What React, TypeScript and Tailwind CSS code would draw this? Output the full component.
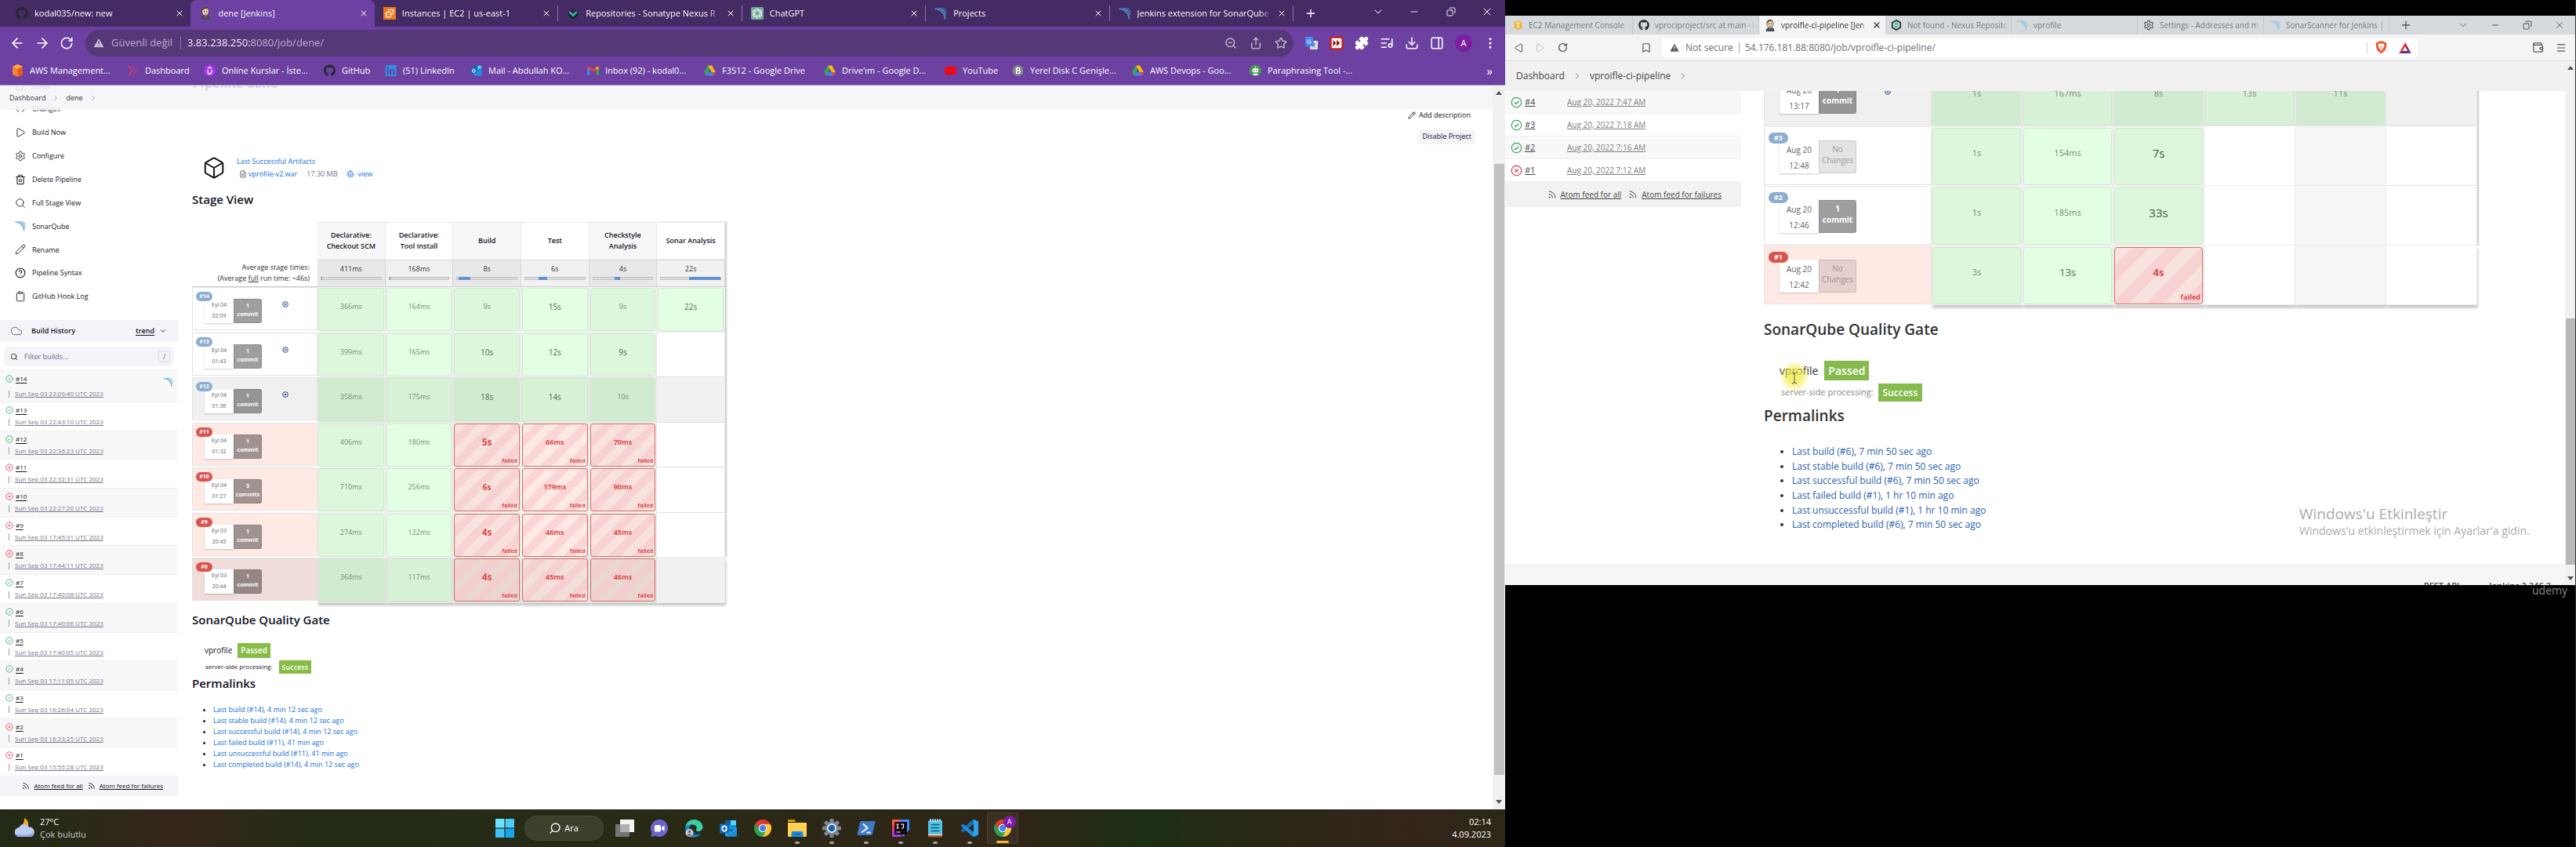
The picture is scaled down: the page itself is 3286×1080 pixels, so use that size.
import React from "react";
import {
  ArrowLeft, ArrowRight, RotateCw, TriangleAlert, ZoomOut, Share, Star, Puzzle, ListMusic, Download,
  PanelRight, MoreVertical, X, Plus, ChevronDown, ChevronRight, Minus, Copy, Play, Settings, Trash2, Search,
  Pencil, CircleHelp, Clipboard, Cloud, Rss, Box, FileText, Fingerprint, Code, Bookmark, Wallet, Menu, Triangle,
} from "lucide-react";
import { FaGithub, FaYoutube, FaLinkedin } from "react-icons/fa";

type Size = "sm" | "lg";

/* ---------- drawings ---------- */

const Waves = ({ className, color }: { className: string; color: string }) => (
  <svg viewBox="0 0 16 16" className={className} fill="none" stroke={color} strokeLinecap="round">
    <path d="M1 2.2c6.500.2 11.600 5 12.400 12.600" strokeWidth="1.500" />
    <path d="M6 1.400c4.200 1.200 7.200 4.400 8.400 8.600" strokeWidth="1.200" />
    <path d="M10.600 1.300c2 1 3.600 2.600 4.500 4.700" strokeWidth="1" />
  </svg>
);

const Butler = ({ className }: { className: string }) => (
  <svg viewBox="0 0 16 18" className={className}>
    <path d="M3 6.500C2.500 2.500 5 .5 8 .5s5.300 2 4.800 6c-.2 3-1.500 6-4.600 6S3.200 9.500 3 6.500z" fill="#efd3b5" stroke="#3d2b22" strokeWidth=".8" />
    <path d="M3 6C2.600 2.300 5 .4 8.200.5c2.300 0 3.600 1 4.200 2.500C9 1.800 6 2.500 4.600 4.500z" fill="#5d4636" />
    <path d="M1.500 18c0-3.500 2-5.500 4.500-6l2.500 2 2.500-2c2 .6 3.600 2.500 3.600 6z" fill="#335061" />
    <path d="M6.500 12.800l2 1 2-1v3l-2-1-2 1z" fill="#d33833" />
    <circle cx="6.300" cy="6.500" r=".8" fill="#222" />
    <circle cx="9.800" cy="6.500" r=".8" fill="#222" />
    <path d="M6.500 9.700q1.600 1 3 0" stroke="#7a3b2b" strokeWidth=".8" fill="none" />
  </svg>
);

const Ec2 = ({ className }: { className: string }) => (
  <svg viewBox="0 0 16 16" className={className}>
    <rect width="16" height="16" fill="#ed7b1c" />
    <path d="M3.500 6.500h6v6h-6zM6.500 6.500v-3h6v6h-3" fill="none" stroke="#fff" strokeWidth="1" />
    <path d="M5 9.500h3M11 3v-1M13 5h1M5 13v1M2.500 8h1" stroke="#fff" strokeWidth=".8" />
  </svg>
);

const Nexus = ({ className }: { className: string }) => (
  <svg viewBox="0 0 16 16" className={className} fill="none">
    <path d="M2 8.500l6 5.500 6-5.500" stroke="#1b1f3b" strokeWidth="3" />
    <path d="M3.500 6.500L8 11l4.500-4.500" stroke="#1bd68b" strokeWidth="2" />
    <path d="M8 2v4" stroke="#1b1f3b" strokeWidth="2.400" />
  </svg>
);

const NexusHex = ({ className }: { className: string }) => (
  <svg viewBox="0 0 16 16" className={className} fill="none">
    <path d="M8 1l6 3.500v7L8 15l-6-3.500v-7z" stroke="#22303a" strokeWidth="2" />
    <path d="M8 4l3 2v4l-3 2-3-2V6z" fill="#3cc294" />
    <path d="M5 7l3 2 3-2" stroke="#fff" strokeWidth="1" />
  </svg>
);

const Chat = ({ className }: { className: string }) => (
  <svg viewBox="0 0 16 16" className={className}>
    <rect width="16" height="16" rx="2" fill="#74aa9c" />
    <g fill="none" stroke="#fff" strokeWidth=".9">
      {[0, 60, 120, 180, 240, 300].map((a) => (
        <path key={a} transform={"rotate(" + a + " 8 8)"} d="M5.600 6.600V4.200a2.300 2.300 0 0 1 4.300-1.100L6.800 5" />
      ))}
    </g>
  </svg>
);

const AwsCube = ({ className }: { className: string }) => (
  <svg viewBox="0 0 14 16" className={className}>
    <path d="M7 0l6.500 3v10L7 16 .5 13V3z" fill="#f58536" />
    <path d="M7 0l6.500 3L7 6 .5 3z" fill="#fba94c" />
    <path d="M7 6v10l6.500-3V3z" fill="#e05a1c" />
  </svg>
);

const Ec2Yellow = ({ className }: { className: string }) => (
  <svg viewBox="0 0 14 16" className={className}>
    <path d="M7 0l6.500 3v10L7 16 .5 13V3z" fill="#f5b335" />
    <path d="M4 4l3-1 3 1v1.500H4zM5.500 7h3v5l-1.500 1-1.500-1z" fill="#fff3d6" />
  </svg>
);

const Chevrons = ({ className }: { className: string }) => (
  <svg viewBox="0 0 16 16" className={className} fill="none" strokeWidth="2.500">
    <path d="M2 1l5 7-5 7" stroke="#b0417f" />
    <path d="M7.500 1l5 7-5 7" stroke="#9a3f8c" />
  </svg>
);

const Udemy = ({ className }: { className: string }) => (
  <svg viewBox="0 0 16 16" className={className}>
    <circle cx="8" cy="8" r="8" fill="#a435f0" />
    <path d="M5.500 7v3a2.500 2.500 0 0 0 5 0V7M5.500 5L8 3.500 10.500 5" fill="none" stroke="#fff" strokeWidth="1.400" />
  </svg>
);

const Outlook = ({ className }: { className: string }) => (
  <svg viewBox="0 0 24 24" className={className}>
    <rect x="8" y="2" width="14" height="12" rx="1" fill="#1490df" />
    <path d="M8 2h7v6H8z" fill="#0a5fa8" />
    <path d="M15 2h6a1 1 0 0 1 1 1v5h-7z" fill="#50d9ff" />
    <path d="M8 11l7.500 5L23 11v10a1.500 1.500 0 0 1-1.500 1.500h-12A1.500 1.500 0 0 1 8 21z" fill="#28a8ea" />
    <path d="M8 22.500L23 12v9a1.500 1.500 0 0 1-1.500 1.500z" fill="#1b8fdb" />
    <rect x="1" y="6.500" width="12" height="12" rx="1.200" fill="#0f6cbd" />
    <ellipse cx="7" cy="12.500" rx="2.800" ry="3.200" fill="none" stroke="#fff" strokeWidth="1.700" />
  </svg>
);

const Gmail = ({ className }: { className: string }) => (
  <svg viewBox="0 0 16 12" className={className}>
    <path d="M0 1.500h3.500V12H1a1 1 0 0 1-1-1z" fill="#4285f4" />
    <path d="M12.500 1.500H16V11a1 1 0 0 1-1 1h-2.500z" fill="#34a853" />
    <path d="M0 1.800C0 .2 1.800-.5 3 .5L8 4.300 13 .5c1.200-1 3-.3 3 1.300L8 8.200z" fill="#ea4335" />
    <path d="M12.500 1L16 1.800V3l-3.500 2.700z" fill="#fbbc04" />
  </svg>
);

const Drive = ({ className }: { className: string }) => (
  <svg viewBox="0 0 16 14" className={className}>
    <path d="M5.300 0L8 4.700 2.700 14 0 9.300z" fill="#34a853" />
    <path d="M5.300 0h5.400L16 9.300h-5.400z" fill="#fbbc04" />
    <path d="M5.400 9.300H16L13.300 14H2.700z" fill="#4285f4" />
    <path d="M10.600 9.300H16L13.300 14z" fill="#ea4335" />
  </svg>
);

const Disk = ({ className }: { className: string }) => (
  <svg viewBox="0 0 16 16" className={className}>
    <circle cx="8" cy="8" r="7.500" fill="#80868b" />
    <path d="M6 4.500h2.800a1.700 1.700 0 0 1 0 3.400H6zM6 8h3.200a1.800 1.800 0 0 1 0 3.600H6z" fill="none" stroke="#fff" strokeWidth="1.500" />
  </svg>
);

const Quill = ({ className }: { className: string }) => (
  <svg viewBox="0 0 16 16" className={className}>
    <circle cx="8" cy="8" r="8" fill="#499557" />
    <rect x="4" y="5" width="8" height="5.500" rx="1.500" fill="#fff" />
    <path d="M5 12h6v2H5zM7.500 2.500h1v2h-1z" fill="#fff" />
    <circle cx="6.300" cy="7.700" r=".9" fill="#499557" />
    <circle cx="9.700" cy="7.700" r=".9" fill="#499557" />
  </svg>
);

const Translate = () => (
  <svg viewBox="0 0 18 18" className="size-[18px]">
    <rect x="7" y="6" width="10" height="11" rx="1" fill="#dfe3e8" />
    <path d="M10 10h5M12.500 9v1c0 2-1 3.500-2.500 4.500M11 11c.8 1.800 2 2.800 3.500 3.500" stroke="#6b7886" strokeWidth=".9" fill="none" />
    <path d="M2 1h8.500l2.500 12H2a1 1 0 0 1-1-1V2a1 1 0 0 1 1-1z" fill="#4a8af4" />
    <path d="M8 5.700a2.300 2.300 0 1 0 .4 1.800H6.300" stroke="#fff" fill="none" />
  </svg>
);

const FastForward = () => (
  <svg viewBox="0 0 18 18" className="size-[18px]">
    <rect x="1.500" y="1.500" width="15" height="15" rx="2.500" fill="#fff" stroke="#c5221f" strokeWidth="2.400" />
    <path d="M4.500 5l4 4-4 4zM9 5l4.500 4L9 13z" fill="#8c1d18" />
  </svg>
);

const Chrome = ({ className }: { className: string }) => (
  <svg viewBox="0 0 24 24" className={className}>
    <path d="M12 7h9.900A11 11 0 0 0 2.600 6.300l5.100 8.200A5 5 0 0 1 12 7z" fill="#e33b2e" />
    <path d="M21.900 7H12a5 5 0 0 1 4.300 7.500L11.700 23A11 11 0 0 0 21.900 7z" fill="#fcc934" />
    <path d="M2.600 6.300A11 11 0 0 0 11.700 23l4.600-8.500a5 5 0 0 1-8.600 0z" fill="#2fa14f" />
    <circle cx="12" cy="12" r="5.300" fill="#fff" />
    <circle cx="12" cy="12" r="4.200" fill="#4285f4" />
  </svg>
);

const WindowsLogo = () => (
  <svg viewBox="0 0 24 24" className="size-6">
    <path d="M0 0h11.400v11.400H0z" fill="#6fe0fb" />
    <path d="M12.600 0H24v11.400H12.600z" fill="#4ccbf7" />
    <path d="M0 12.600h11.400V24H0z" fill="#3fc3f6" />
    <path d="M12.600 12.600H24V24H12.600z" fill="#17a6ee" />
  </svg>
);

const TaskView = () => (
  <svg viewBox="0 0 24 24" className="size-6">
    <rect x="6" y="1" width="18" height="16" fill="#f4f4f4" />
    <rect x="0" y="7" width="18" height="16" fill="#737573" />
    <rect x="6" y="7" width="12" height="10" fill="#b0b1af" />
  </svg>
);

const TeamsChat = () => (
  <svg viewBox="0 0 24 24" className="size-6">
    <path d="M12 1a11 11 0 1 1-5 20.800L1.500 23l1.200-5.200A11 11 0 0 1 12 1z" fill="#6c66cc" />
    <rect x="6" y="8" width="8" height="8.500" rx="1.500" fill="#fff" />
    <path d="M15 11l3.500-2.500v7.500L15 13.500z" fill="#fff" />
  </svg>
);

const Edge = () => (
  <svg viewBox="0 0 24 24" className="size-6">
    <path d="M1.200 11C2 5 6.500 1 12.300 1 18.500 1 23.500 5.500 23.500 10.500c0 3.500-2.700 5.500-5.500 5.500-2.300 0-3.500-1-3-2 .5-.9.800-1.500.8-2.500 0-2.400-2.300-4-5.200-4C6 7.500 2 9 1.200 11z" fill="#39cfa8" />
    <path d="M1.200 11C3 8.200 6.500 7 10 7.200c-3 1-4.200 3.300-3.700 6.800.7 4.500 5 7 10 6.500 2.200-.3 4-1.200 5.200-2.300C19.500 21.500 16 23.500 12 23.500 5 23.500 .3 17.500 1.200 11z" fill="#1b86d2" />
    <path d="M9.500 11.500c-2 5 1.500 9.500 7 9 2-.2 3.800-1.200 5-2.300-4 1.500-11 .5-12-6.700z" fill="#0e4f8f" />
    <circle cx="6.500" cy="18" r="5" fill="#c9cdd3" />
    <circle cx="6.500" cy="16.500" r="1.800" fill="#5c6470" />
    <path d="M3.300 21.500c.5-3 6-3 6.400 0z" fill="#5c6470" />
  </svg>
);

const Explorer = () => (
  <svg viewBox="0 0 24 24" className="size-6">
    <path d="M0 2.500A1.500 1.500 0 0 1 1.500 1H8l2.500 3H0z" fill="#d99a12" />
    <path d="M0 5h23a1 1 0 0 1 1 1v15.500a1.500 1.500 0 0 1-1.500 1.500h-21A1.500 1.500 0 0 1 0 21.500z" fill="#ffd052" />
    <path d="M4.500 23v-5A2 2 0 0 1 6.500 16h11a2 2 0 0 1 2 2v5z" fill="#1a8fe0" />
    <path d="M8 18.500h8v1.800H8z" fill="#0c6fbd" />
  </svg>
);

const Gear = () => (
  <svg viewBox="0 0 24 24" className="size-6">
    <g fill="#7d8791">
      {[0, 45, 90, 135].map((a) => (
        <rect key={a} x="9.500" y="0" width="5" height="24" rx="1" transform={"rotate(" + a + " 12 12)"} />
      ))}
      <circle cx="12" cy="12" r="8.500" />
    </g>
    <circle cx="12" cy="12" r="6" fill="#e9eef2" />
    <circle cx="12" cy="12" r="4.300" fill="#1464a8" />
  </svg>
);

const PowerShell = () => (
  <svg viewBox="0 0 24 24" className="size-6">
    <path d="M5 3h17.500a1 1 0 0 1 1 1.300l-3.700 15.500a1.500 1.500 0 0 1-1.500 1.200H1.500a1 1 0 0 1-1-1.300L4 4.200A1.500 1.500 0 0 1 5 3z" fill="#4079c8" />
    <path d="M8 6.500l5.500 5.500-7.500 5.500M12.500 17.500h5" stroke="#fff" strokeWidth="1.900" fill="none" />
  </svg>
);

const Idea = () => (
  <svg viewBox="0 0 24 24" className="size-6">
    <path d="M1 1h12l-3 12L1 15z" fill="#fe5d3d" />
    <path d="M11 1h12v13l-8 9-5-9z" fill="#3e8bff" />
    <path d="M1 12l9-3 3 14H1z" fill="#b03ad8" />
    <path d="M1 6l4 6-4 5z" fill="#fe315d" />
    <rect x="4" y="4" width="16" height="16" fill="#14060f" />
    <path d="M6.500 7h3M8 7v5M6.500 12h3M12 7h3.500v3.500q0 1.500-2.500 1.500M6.500 17h5" stroke="#fff" strokeWidth="1.200" fill="none" />
  </svg>
);

const Notepad = () => (
  <svg viewBox="0 0 24 24" className="size-6">
    <rect x="3" y="2" width="18" height="20" rx="1.500" fill="#53c5e8" />
    <rect x="3" y="21" width="18" height="2.500" rx="1" fill="#c2571c" />
    <path d="M3 20.500h18" stroke="#eef2f3" strokeWidth="1" />
    <path d="M6 0v4M9 0v4M12 0v4M15 0v4M18 0v4" stroke="#d9f3fb" strokeWidth="1.300" />
    <path d="M6.500 7.500h11M6.500 11.500h11M6.500 15.500h11" stroke="#0f5c7c" strokeWidth="1.600" />
  </svg>
);

const VsCode = () => (
  <svg viewBox="0 0 24 24" className="size-6">
    <path d="M17.500 6.500L3.500 17.200 1 16V14.800L15 1.500l2.500-.5z" fill="#1272b8" />
    <path d="M17.500 17.500L3.500 6.800 1 8v1.200L15 22.500l2.500.5z" fill="#1b8bd4" />
    <path d="M17 .8l6 2.800v16.800l-6 2.800z" fill="#2ca3ea" />
  </svg>
);

const Weather = () => (
  <svg viewBox="0 0 28 28" className="size-7">
    <path d="M13 1c6 3 6.500 9 3 13H5C10 12 13 8 13 1z" fill="#f5a524" />
    <path d="M7 25a6 6 0 0 1-.5-12A7 7 0 0 1 19 12.500 6.300 6.300 0 0 1 20.500 25z" fill="#bccdf2" />
    <path d="M7 25a6 6 0 0 1-5.500-4c6 2 18 2 24.500-2a6.200 6.200 0 0 1-5.500 6z" fill="#93acdf" />
  </svg>
);

const Brave = () => (
  <svg viewBox="0 0 16 18" className="h-[17px] w-[15px]">
    <path d="M5 .5h6l1.300 1.400 1.700-.2 1.500 2.300-.6 1.500.3 1L13.500 13 8 17.500 2.500 13 .8 6.500l.3-1L.5 4 2 1.700l1.700.2z" fill="#f1562b" />
    <path d="M8 3.800l2.600-.5 2 2.500-1.400 2.400.5 1.400-2 1.300L8 14.300l-1.700-3.400-2-1.300.5-1.400-1.400-2.400 2-2.500z" fill="#fff" />
    <path d="M6 7l1.300 1M10 7L8.700 8M8 8v2.500" stroke="#f1562b" strokeWidth=".8" />
  </svg>
);

const Bat = () => (
  <svg viewBox="0 0 18 16" className="h-[14px] w-4">
    <path d="M9 0L0 16l5.500-3.500L9 6z" fill="#e8452c" />
    <path d="M9 0l9 16-5.500-3.500L9 6z" fill="#a0236e" />
    <path d="M0 16h18l-5.500-3.500h-7z" fill="#5e2b8e" />
  </svg>
);

const Status = ({ ok, className }: { ok: boolean; className: string }) => (
  <svg viewBox="0 0 12 12" className={className} fill="none" stroke={ok ? "#3aa864" : "#e23a55"}>
    <circle cx="6" cy="6" r="5" />
    {ok ? <path d="M4 6.200l1.400 1.400L8.200 4.600" /> : <path d="M4.300 4.300l3.400 3.400M7.700 4.300L4.300 7.700" />}
  </svg>
);

const Target = () => (
  <svg viewBox="0 0 10 10" className="size-2" fill="none" stroke="#3a5ba0" strokeWidth="1.300">
    <circle cx="5" cy="5" r="4" />
    <path d="M5 3v4M3 5h4" />
  </svg>
);

/* ---------- stage view ---------- */

type Cell = { t: string; big?: 0 | 1 | 2; failed?: boolean } | null;
type Run = { id: string; date: string; time: string; n: string; label: string; ok: boolean; dim?: boolean; mark?: boolean; cells: Cell[] };

const g = (t: string, big: 0 | 1 | 2 = 0): Cell => ({ t, big });
const f = (t: string, big: 0 | 1 | 2 = 0): Cell => ({ t, big, failed: true });

const StageCell = ({ cell, odd, dim, size }: { cell: Cell; odd: boolean; dim?: boolean; size: Size }) => {
  const lg = size === "lg";
  if (!cell) {
    const fill = dim ? "bg-[#f1f1f1]" : lg && odd ? "bg-[#f6f6f6]" : "bg-white";
    return <td className={"border-b border-r border-[#ececec] p-0 " + fill} />;
  }
  const fs = lg
    ? cell.big === 2 ? "text-[15px]" : cell.big === 1 ? "text-[13px]" : "text-[11px]"
    : cell.big === 2 ? "text-[12px]" : cell.big === 1 ? "text-[10px]" : "text-[9px]";
  const pad = lg ? "h-[73px] pt-[21px] leading-5 rounded-[4px] " : "h-[55px] pt-[15px] leading-4 rounded-[3px] ";
  let look: string;
  if (cell.failed) {
    const stripes = lg ? "bg-[size:44px_44px] " : "bg-[size:30px_30px] ";
    look =
      "border-[#dc6b68] font-bold text-[#db4c4c] bg-[linear-gradient(-45deg,#f8c8cc99_25%,transparent_25%,transparent_50%,#f8c8cc99_50%,#f8c8cc99_75%,transparent_75%)] " +
      stripes +
      (dim ? (odd ? "bg-[#ead7d2]" : "bg-[#f2dfda]") : odd ? "bg-[#f7e2de]" : "bg-[#ffe9e4]");
  } else {
    const ink = cell.big === 2 ? "text-[#3f583f] " : cell.big === 1 ? "text-[#4f6b55] " : "text-[#748f79] ";
    look = "border-[#d8e3d8] " + ink + (dim ? (odd ? "bg-[#d1ebd1]" : "bg-[#d8f2d8]") : odd ? "bg-[#dcf7dc]" : "bg-[#e3ffe3]");
  }
  return (
    <td className={"border-r border-[#e4eae4] p-px align-middle " + (dim ? "bg-[#dfeadf]" : "bg-[#ecf6ec]")}>
      <div className={"relative border text-center " + pad + fs + " " + look}>
        {cell.t}
        {cell.failed && (
          <span className={lg ? "absolute bottom-0 right-[2px] text-[9px] leading-4" : "absolute bottom-0 right-[2px] text-[7px] leading-3"}>failed</span>
        )}
      </div>
    </td>
  );
};

const StageRow = ({ run, size }: { run: Run; size: Size }) => {
  const lg = size === "lg";
  const bg = run.ok ? (run.dim ? "bg-[#f0f0f0]" : "bg-white") : run.dim ? "bg-[#f0dcd8]" : "bg-[#ffe9e5]";
  const none = run.label === "Changes";
  const commit = none
    ? run.ok ? "bg-[#e4e4e4] text-[#9c9c9c]" : "bg-[#e6d0cd] text-[#a08f8d]"
    : run.ok ? (run.dim ? "bg-[#959595] text-white" : "bg-[#9e9e9e] text-white") : run.dim ? "bg-[#958884] text-white" : "bg-[#a09290] text-white";
  return (
    <tr className={lg ? "h-[76px]" : "odd:h-[58px] even:h-[57px]"}>
      <th scope="row" className="p-0 align-top font-normal">
        <div className={"flex border border-[#e6e2e2] " + bg + (lg ? " h-[75px] pl-[5px] pt-[7px]" : " h-[55px] pl-[4px] pt-[5px]")}>
          <div className="relative">
            <span
              className={
                "absolute left-0 top-0 rounded-full text-center font-bold text-white " +
                (lg ? "w-[25px] text-[9px] leading-[14px] " : "w-[21px] text-[7px] leading-[12px] ") +
                (run.ok ? "bg-[#8aadd0]" : "bg-[#d9534f]")
              }
            >
              {run.id}
            </span>
            <div className={lg ? "ml-[14px] mt-[10px] flex text-[10px]" : "ml-[11px] mt-[9px] flex text-[7px]"}>
              <div
                className={
                  "bg-white text-center text-[#5f5f6b] shadow-[0_1px_2px_#0003] " +
                  (lg ? "h-[42px] w-[50px] pt-[2px] leading-[20px]" : "h-[31px] w-[37px] pt-px leading-[14px]")
                }
              >
                {run.date}
                <br />
                {run.time}
              </div>
              <div
                className={
                  "rounded-r-[3px] border border-black/10 text-center " +
                  commit +
                  (none ? "" : " font-bold") +
                  (lg ? " h-[42px] w-[48px] pt-[3px] leading-[14px]" : " h-[31px] w-[36px] pt-[2px] leading-[11px]")
                }
              >
                {run.n}
                <br />
                {run.label}
              </div>
            </div>
          </div>
          {run.mark && (
            <div className={lg ? "ml-9 mt-5" : "ml-[26px] mt-3"}>
              <Target />
            </div>
          )}
        </div>
      </th>
      {run.cells.map((c, i) => (
        <StageCell key={i} cell={c} odd={i % 2 === 0} dim={run.dim} size={size} />
      ))}
    </tr>
  );
};

const stages = [
  { name: "Declarative:|Checkout SCM", avg: "411ms", at: 0, w: 1 },
  { name: "Declarative:|Tool Install", avg: "168ms", at: 0, w: 1 },
  { name: "Build", avg: "8s", at: 2, w: 20 },
  { name: "Test", avg: "6s", at: 22, w: 15 },
  { name: "Checkstyle|Analysis", avg: "4s", at: 36, w: 10 },
  { name: "Sonar Analysis", avg: "22s", at: 47, w: 53 },
];

const leftRuns: Run[] = [
  { id: "#14", date: "Eyl 04", time: "02:09", n: "1", label: "commit", ok: true, mark: true, cells: [g("366ms"), g("164ms"), g("9s"), g("15s", 1), g("9s"), g("22s", 1)] },
  { id: "#13", date: "Eyl 04", time: "01:43", n: "1", label: "commit", ok: true, mark: true, cells: [g("399ms"), g("165ms"), g("10s", 1), g("12s", 1), g("9s", 1), null] },
  { id: "#12", date: "Eyl 04", time: "01:36", n: "1", label: "commit", ok: true, dim: true, mark: true, cells: [g("358ms"), g("175ms"), g("18s", 1), g("14s", 1), g("10s"), null] },
  { id: "#11", date: "Eyl 04", time: "01:32", n: "1", label: "commit", ok: false, cells: [g("406ms"), g("180ms"), f("5s", 2), f("66ms"), f("70ms"), null] },
  { id: "#10", date: "Eyl 04", time: "01:27", n: "3", label: "commits", ok: false, cells: [g("710ms"), g("256ms"), f("6s", 1), f("179ms"), f("90ms"), null] },
  { id: "#9", date: "Eyl 03", time: "20:45", n: "1", label: "commit", ok: false, cells: [g("274ms"), g("122ms"), f("4s", 2), f("46ms"), f("45ms"), null] },
  { id: "#8", date: "Eyl 03", time: "20:44", n: "1", label: "commit", ok: false, dim: true, cells: [g("364ms"), g("117ms"), f("4s", 2), f("45ms"), f("46ms"), null] },
];

const rightRuns: Run[] = [
  { id: "#4", date: "Aug 20", time: "13:17", n: "1", label: "commit", ok: true, dim: true, mark: true, cells: [g("1s"), g("167ms"), g("8s"), g("13s"), g("11s"), null] },
  { id: "#3", date: "Aug 20", time: "12:48", n: "No", label: "Changes", ok: true, cells: [g("1s"), g("154ms"), g("7s", 2), null, null, null] },
  { id: "#2", date: "Aug 20", time: "12:46", n: "1", label: "commit", ok: true, cells: [g("1s"), g("185ms"), g("33s", 2), null, null, null] },
  { id: "#1", date: "Aug 20", time: "12:42", n: "No", label: "Changes", ok: false, cells: [g("3s"), g("13s", 1), f("4s", 1), null, null, null] },
];

/* ---------- left window ---------- */

const leftTabs = [
  { t: "kodal035/new: new", i: <FaGithub className="size-4 text-[#24292f]" /> },
  { t: "dene [Jenkins]", i: <Butler className="size-4" />, on: true },
  { t: "Instances | EC2 | us-east-1", i: <Ec2 className="size-4" /> },
  { t: "Repositories - Sonatype Nexus R", i: <Nexus className="size-4" /> },
  { t: "ChatGPT", i: <Chat className="size-4" /> },
  { t: "Projects", i: <Waves className="size-4" color="#4b9fd5" /> },
  { t: "Jenkins extension for SonarQube", i: <Waves className="size-4" color="#4b9fd5" /> },
];

const bookmarks = [
  { t: "AWS Management...", w: "w-[147px]", i: <AwsCube className="h-4 w-[15px]" /> },
  { t: "Dashboard", w: "w-[98px]", i: <Chevrons className="size-4" /> },
  { t: "Online Kurslar - İste...", w: "w-[153px]", i: <Udemy className="size-4" /> },
  { t: "GitHub", w: "w-[78px]", i: <FaGithub className="size-4 text-[#24292f]" /> },
  { t: "(51) LinkedIn", w: "w-[109px]", i: <FaLinkedin className="size-4 text-[#2f8fe0]" /> },
  { t: "Mail - Abdullah KO...", w: "w-[149px]", i: <Outlook className="size-4" /> },
  { t: "Inbox (92) - kodal0...", w: "w-[149px]", i: <Gmail className="h-3 w-4" /> },
  { t: "F3512 - Google Drive", w: "w-[153px]", i: <Drive className="h-[14px] w-4" /> },
  { t: "Drive'ım - Google D...", w: "w-[154px]", i: <Drive className="h-[14px] w-4" /> },
  { t: "YouTube", w: "w-[86px]", i: <FaYoutube className="size-4 text-[#f00]" /> },
  { t: "Yerel Disk C Genişle...", w: "w-[153px]", i: <Disk className="size-4" /> },
  { t: "AWS Devops - Goo...", w: "w-[150px]", i: <Drive className="h-[14px] w-4" /> },
  { t: "Paraphrasing Tool -...", w: "w-[150px]", i: <Quill className="size-4" /> },
];

const menu = [
  { t: "Build Now", i: <Play className="size-3.5" strokeWidth={1.5} /> },
  { t: "Configure", i: <Settings className="size-3.5" strokeWidth={1.5} /> },
  { t: "Delete Pipeline", i: <Trash2 className="size-3.5" strokeWidth={1.8} /> },
  { t: "Full Stage View", i: <Search className="size-3.5" strokeWidth={1.5} /> },
  { t: "SonarQube", i: <Waves className="size-3.5" color="#4b9fd5" /> },
  { t: "Rename", i: <Pencil className="size-3.5" strokeWidth={1.5} /> },
  { t: "Pipeline Syntax", i: <CircleHelp className="size-3.5" strokeWidth={1.8} /> },
  { t: "GitHub Hook Log", i: <Clipboard className="size-3.5" strokeWidth={1.5} /> },
];

const builds: [string, string, boolean][] = [
  ["#13", "Sun Sep 03 22:43:10 UTC 2023", true],
  ["#12", "Sun Sep 03 22:36:23 UTC 2023", true],
  ["#11", "Sun Sep 03 22:32:31 UTC 2023", false],
  ["#10", "Sun Sep 03 22:27:20 UTC 2023", false],
  ["#9", "Sun Sep 03 17:45:31 UTC 2023", false],
  ["#8", "Sun Sep 03 17:44:11 UTC 2023", false],
  ["#7", "Sun Sep 03 17:40:08 UTC 2023", true],
  ["#6", "Sun Sep 03 17:40:06 UTC 2023", true],
  ["#5", "Sun Sep 03 17:40:05 UTC 2023", true],
  ["#4", "Sun Sep 03 17:11:05 UTC 2023", true],
  ["#3", "Sun Sep 03 16:26:04 UTC 2023", true],
  ["#2", "Sun Sep 03 16:23:25 UTC 2023", false],
  ["#1", "Sun Sep 03 15:55:28 UTC 2023", false],
];

const BuildEntry = ({ id, date, ok, first }: { id: string; date: string; ok: boolean; first?: boolean }) => (
  <div className="pl-[7px] pt-1">
    <div className="flex h-3 items-center gap-[3px]">
      <Status ok={ok} className="size-[10px]" />
      <a href="#" className="text-[8px] font-medium text-[#14141f] underline underline-offset-2">{id}</a>
    </div>
    <div className={"ml-1 flex h-3 items-center " + (first ? "mt-[7px]" : "mt-[3px]")}>
      <span className="h-[9px] w-px bg-[#9a9aa8]" />
      <a href="#" className="ml-[7px] text-[8px] text-[#74748a] underline">{date}</a>
    </div>
  </div>
);

const LeftBrowserBar = () => (
  <header className="bg-[#6d41a1] text-white">
    <div className="flex h-[34px] bg-[#452b64] pl-[9px]">
      <div className="grid w-[1641px] grid-cols-7">
        {leftTabs.map((t, k) => (
          <div key={t.t} className={"flex min-w-0 items-center gap-2 pl-[11px] pr-2 text-[11px] " + (t.on ? "rounded-t-lg bg-[#6d41a1]" : "")}>
            <span className="shrink-0">{t.i}</span>
            <span className="flex-1 overflow-hidden whitespace-nowrap [mask-image:linear-gradient(to_right,black_92%,transparent)]">{t.t}</span>
            <button aria-label="Close tab" className="shrink-0"><X className="size-3" /></button>
            {k > 1 && <span className="-mr-2 h-5 w-px bg-[#8a72a5]" />}
          </div>
        ))}
      </div>
      <button aria-label="New tab" className="ml-3 flex w-5 items-center justify-center"><Plus className="size-4" /></button>
      <div className="ml-auto grid w-[185px] grid-cols-4 place-items-center pb-1">
        <button aria-label="Search tabs"><ChevronDown className="size-4" strokeWidth={1.5} /></button>
        <button aria-label="Minimize"><Minus className="size-3.5" strokeWidth={1.5} /></button>
        <button aria-label="Restore"><Copy className="size-3 -scale-x-100" strokeWidth={1.8} /></button>
        <button aria-label="Close"><X className="size-4" strokeWidth={1.5} /></button>
      </div>
    </div>
    <div className="flex h-[42px] items-center pl-3">
      <div className="flex w-[97px] gap-3">
        <button aria-label="Back"><ArrowLeft className="size-5" /></button>
        <button aria-label="Forward"><ArrowRight className="size-5" /></button>
        <button aria-label="Reload"><RotateCw className="size-[18px]" /></button>
      </div>
      <div className="flex h-[34px] flex-1 items-center rounded-full bg-[#563879] pl-[9px] pr-2 text-[13px]">
        <TriangleAlert className="size-4 fill-[#c8bfd3] text-[#563879]" />
        <span className="ml-2 w-[80px] whitespace-nowrap text-[#b9abc9]">Güvenli değil</span>
        <span className="mx-2 h-4 w-px bg-[#8a72a5]" />
        <input
          aria-label="Address"
          defaultValue="3.83.238.250:8080/job/dene/"
          className="flex-1 bg-[linear-gradient(90deg,#ffffff_80px,#c3b6d2_80px)] bg-clip-text text-transparent outline-none"
        />
        <div className="flex items-center gap-4 text-[#c8bfd3]">
          <ZoomOut className="size-4" />
          <Share className="size-4" />
          <Star className="size-4" />
        </div>
      </div>
      <div className="ml-[14px] mr-[10px] flex items-center gap-[14px]">
        <Translate />
        <FastForward />
        <Puzzle className="size-[18px] fill-white" />
        <ListMusic className="size-[18px]" />
        <Download className="size-[18px]" />
        <PanelRight className="size-[18px]" />
        <span className="flex size-[22px] items-center justify-center rounded-full bg-[#7b1fa2] text-[11px]">A</span>
        <MoreVertical className="size-[18px]" />
      </div>
    </div>
    <nav className="flex h-[33px] items-center border-b border-[#a184c4] pb-1 pl-[15px] pr-4 text-[11px]">
      {bookmarks.map((b) => (
        <a href="#" key={b.t} className={"flex shrink-0 items-center gap-2 whitespace-nowrap " + b.w}>
          <span className="flex w-[15px] shrink-0 justify-center">{b.i}</span>
          {b.t}
        </a>
      ))}
      <span className="ml-auto text-[15px]">»</span>
    </nav>
  </header>
);

const LeftSidebar = () => (
  <aside className="w-[227px] text-[9px] text-[#14141f]">
    <a href="#" className="-mt-[9px] mb-[7px] flex h-4 items-center gap-2 pl-[19px]">
      <Code className="size-3.5" strokeWidth={1.5} />
      Changes
    </a>
    <nav className="grid h-[239px] auto-rows-fr">
      {menu.map((m) => (
        <a href="#" key={m.t} className="flex items-center gap-2 pl-[19px]">
          {m.i}
          {m.t}
        </a>
      ))}
    </nav>
    <div className="mt-[15px] flex h-7 items-center bg-[#f3f3f8] pl-[13px] pr-[14px]">
      <Cloud className="size-4 text-[#6a6a80]" strokeWidth={1.5} />
      <span className="ml-[11px] font-semibold">Build History</span>
      <a href="#" className="ml-auto font-semibold underline underline-offset-2">trend</a>
      <ChevronDown className="ml-1.5 size-2.5" />
    </div>
    <label className="mx-[5px] mt-[6px] flex h-[25px] items-center rounded-md bg-[#f3f3f8] pl-2 pr-[5px]">
      <Search className="size-2.5" />
      <input aria-label="Filter builds" placeholder="Filter builds..." className="ml-2 w-0 flex-1 bg-transparent outline-none placeholder:text-[#6a6a80]" />
      <kbd className="flex size-[15px] items-center justify-center rounded-[3px] border border-[#d8d8e2] font-sans text-[8px] text-[#6a6a80]">/</kbd>
    </label>
    <div className="mt-[5px] flex h-10 justify-between border-t border-[#efeff3] bg-[#f8f8f8] pr-[6px]">
      <BuildEntry id="#14" date="Sun Sep 03 23:09:40 UTC 2023" ok first />
      <Waves className="mt-2 size-3" color="#4b9fd5" />
    </div>
    <ul className="grid h-[477px] auto-rows-fr">
      {builds.map(([id, date, ok]) => (
        <li key={id} className="border-t border-[#efeff3] even:bg-[#f8f8f8]">
          <BuildEntry id={id} date={date} ok={ok} />
        </li>
      ))}
    </ul>
    <div className="flex h-[26px] items-center justify-end gap-[5px] bg-[#f3f3f8] pr-[19px] text-[8px] font-medium">
      <Rss className="size-2.5" />
      <a href="#" className="mr-px underline">Atom feed for all</a>
      <Rss className="size-2.5" />
      <a href="#" className="underline">Atom feed for failures</a>
    </div>
  </aside>
);

const LeftStageView = () => (
  <table className="w-[680px] table-fixed border-separate border-spacing-0 text-[9px]">
    <colgroup>
      <col className="w-[160px]" />
      {stages.map((s) => <col key={s.name} />)}
    </colgroup>
    <thead>
      <tr className="h-12">
        <td className="p-0" />
        {stages.map((s, i) => (
          <th
            key={s.name}
            scope="col"
            className={
              "border-r border-t border-[#e8e8ea] p-0 font-semibold leading-[14px] text-[#14141f] last:shadow-[2px_0_2px_#ccc] " +
              (i % 2 ? "bg-white" : "bg-[#f7f7f7]")
            }
          >
            {s.name.split("|").map((l) => <div key={l}>{l}</div>)}
          </th>
        ))}
      </tr>
      <tr className="h-[35px]">
        <td className="border-b border-[#c9c9c9] p-0 pr-[10px] text-right leading-[14px] text-[#333]">
          Average stage times:
          <br />
          (Average <u>full</u> run time: ~46s)
        </td>
        {stages.map((s, i) => (
          <td
            key={s.name}
            className={"border-b border-r border-t border-[#d6d6d6] p-0 px-1 text-center leading-[14px] text-[#333] last:shadow-[2px_0_2px_#ccc] " + (i % 2 ? "bg-[#f1f1f1]" : "bg-[#e8e8e8]")}
          >
            {s.avg}
            <div className="mb-1 mt-[3px] flex h-1 border border-[#c4c4c4] bg-[#dcdcdc]">
              <div className="-my-px bg-[#6290d4]" style={{ marginLeft: s.at + "%", width: s.w + "%" }} />
            </div>
          </td>
        ))}
      </tr>
    </thead>
    <tbody className="[&>tr:not(:last-child)>td:last-child]:shadow-[2px_0_2px_#ccc] [&>tr:last-child>td]:shadow-[1px_3px_3px_#c4c4c4]">
      {leftRuns.map((r) => <StageRow key={r.id} run={r} size="sm" />)}
    </tbody>
  </table>
);

const leftLinks = [
  "Last build (#14), 4 min 12 sec ago",
  "Last stable build (#14), 4 min 12 sec ago",
  "Last successful build (#14), 4 min 12 sec ago",
  "Last failed build (#11), 41 min ago",
  "Last unsuccessful build (#11), 41 min ago",
  "Last completed build (#14), 4 min 12 sec ago",
];

const LeftMain = () => (
  <main className="min-w-0 flex-1 pl-[18px] text-[#14141f]">
    <div className="flex flex-col items-end gap-[11px] pr-[22px] text-[9px]">
      <a href="#" className="mr-[6px] flex items-center gap-1"><Pencil className="size-2.5" />Add description</a>
      <button className="h-[19px] rounded-[4px] bg-[#f3f3f8] px-[5px]">Disable Project</button>
    </div>
    <div className="mt-[14px] flex items-center gap-[14px] pl-[13px] text-[9px] leading-[16px]">
      <Box className="size-[30px]" strokeWidth={1.6} />
      <div className="text-[#1471d8]">
        <a href="#">Last Successful Artifacts</a>
        <div className="flex items-center pl-[3px]">
          <FileText className="mr-0.5 size-2.5 text-[#666]" />
          <a href="#">vprofile-v2.war</a>
          <span className="ml-3 mr-3 text-[#73738c]">17.30 MB</span>
          <Fingerprint className="mr-1 size-2.5" />
          <a href="#">view</a>
        </div>
      </div>
    </div>
    <h2 className="mt-3 text-[15px] font-semibold leading-6">Stage View</h2>
    <div className="mt-[17px]">
      <LeftStageView />
    </div>
    <h2 className="mt-[9px] text-[15px] font-semibold leading-6">SonarQube Quality Gate</h2>
    <div className="mt-[18px] pl-4">
      <div className="flex h-[19px] items-center gap-[7px] text-[10px]">
        vprofile
        <span className="bg-[#87bc45] px-1 font-semibold leading-[19px] text-white">Passed</span>
      </div>
      <div className="mt-[3px] flex h-[17px] items-center gap-2 pl-px text-[8px]">
        server-side processing:
        <span className="bg-[#87bc45] px-1 text-[9px] font-semibold leading-[17px] text-white">Success</span>
      </div>
    </div>
    <h2 className="text-[15px] font-semibold leading-6">Permalinks</h2>
    <ul className="mt-[15px] list-disc pl-[27px] text-[9px] leading-[14px]">
      {leftLinks.map((l) => (
        <li key={l}><a href="#" className="text-[#1471d8]">{l}</a></li>
      ))}
    </ul>
  </main>
);

const taskIcons = [TaskView, TeamsChat, Edge, () => <Outlook className="size-6" />, () => <Chrome className="size-6" />, Explorer, Gear, PowerShell, Idea, Notepad, VsCode];

const Taskbar = () => (
  <footer className="grid h-12 grid-cols-[1fr_auto_1fr] items-center bg-[linear-gradient(90deg,#212b16,#35251a_12%,#212b16_22%,#262b16_36%,#2c2716_55%,#2f2516_68%,#1c2f14_76%,#2a2716_84%,#33241a_94%,#2c2817)] pl-[18px] pr-[18px] text-[11px] leading-4 text-white">
    <div className="flex items-center gap-[5px]">
      <Weather />
      <div>
        27°C
        <div className="text-[#c8cbc2]">Çok bulutlu</div>
      </div>
    </div>
    <div className="ml-2.5 flex h-12 items-center">
      <button aria-label="Start" className="mr-[13px]"><WindowsLogo /></button>
      <button className="mr-[5px] flex h-8 w-[101px] items-center justify-center gap-1 rounded-full border border-white/5 bg-white/10">
        <Search className="size-4 -scale-x-100" />
        Ara
      </button>
      {taskIcons.map((Ic, i) => (
        <div key={i} className="relative flex h-12 w-11 items-center justify-center">
          <Ic />
          {i > 4 && <span className="absolute bottom-1 h-[3px] w-1.5 rounded-full bg-[#a3a5a0]" />}
        </div>
      ))}
      <div className="relative flex h-10 w-10 items-center justify-center rounded border border-white/10 bg-white/5">
        <Chrome className="size-6" />
        <span className="absolute right-0.5 top-[3px] flex size-4 items-center justify-center rounded-full bg-[#7b1fa2] text-[9px]">A</span>
        <span className="absolute bottom-0 h-[3px] w-4 rounded-full bg-[#fcb42c]" />
      </div>
    </div>
    <div className="text-right">
      02:14
      <div>4.09.2023</div>
    </div>
  </footer>
);

const Arrow = ({ down }: { down?: boolean }) => (
  <svg viewBox="0 0 8 5" className={down ? "h-[5px] w-2 rotate-180" : "h-[5px] w-2"}><path d="M4 0l4 5H0z" fill="#505050" /></svg>
);

const LeftWindow = () => (
  <section className="flex h-[1080px] flex-col bg-white">
    <LeftBrowserBar />
    <div className="flex min-h-0 flex-1">
      <div className="min-w-0 flex-1">
        <div className="relative z-10 h-[31px] overflow-hidden bg-[#f5f5f8]/90 text-[9px]">
          <div className="absolute left-[19px] top-[-6px] flex items-center gap-2 text-[#dedee4]"><Clipboard className="size-3" />Status</div>
          <div className="absolute left-[246px] top-[-13px] text-[16px] font-bold leading-5 text-[#d8d8de]">Pipeline dene</div>
          <div className="flex items-center gap-2 pl-3 pt-[9px] leading-[13px] text-[#333340]">
            Dashboard <ChevronRight className="size-2.5 text-[#8a8a9a]" /> dene <ChevronRight className="size-2.5 text-[#8a8a9a]" />
          </div>
        </div>
        <div className="flex">
          <LeftSidebar />
          <LeftMain />
        </div>
      </div>
      <div className="flex w-4 flex-col items-center bg-[#f1f1f1] py-[7px]">
        <Arrow />
        <div className="mt-[88px] h-[779px] w-[13px] bg-[#c1c1c1]" />
        <div className="mt-auto"><Arrow down /></div>
      </div>
    </div>
    <Taskbar />
  </section>
);

/* ---------- right window ---------- */

const rightTabs = [
  { t: "EC2 Management Console", i: <Ec2Yellow className="h-3 w-[13px]" /> },
  { t: "vprociproject/src at main · i", i: <FaGithub className="size-3.5 text-[#24292f]" /> },
  { t: "vproifle-ci-pipeline [Jen", i: <Butler className="h-[15px] w-3.5" />, on: true },
  { t: "Not found - Nexus Reposito", i: <NexusHex className="size-3.5" /> },
  { t: "vprofile", i: <Waves className="size-3.5" color="#8fc3e6" /> },
  { t: "Settings - Addresses and m", i: <Settings className="size-3.5 text-[#555]" /> },
  { t: "SonarScanner for Jenkins |", i: <Waves className="size-3.5" color="#8fc3e6" /> },
];

const rightBuilds: [string, string, boolean][] = [
  ["#4", "Aug 20, 2022 7:47 AM", true],
  ["#3", "Aug 20, 2022 7:18 AM", true],
  ["#2", "Aug 20, 2022 7:16 AM", true],
  ["#1", "Aug 20, 2022 7:12 AM", false],
];

const rightLinks = [
  "Last build (#6), 7 min 50 sec ago",
  "Last stable build (#6), 7 min 50 sec ago",
  "Last successful build (#6), 7 min 50 sec ago",
  "Last failed build (#1), 1 hr 10 min ago",
  "Last unsuccessful build (#1), 1 hr 10 min ago",
  "Last completed build (#6), 7 min 50 sec ago",
];

const RightBrowserBar = () => (
  <header className="text-[#555]">
    <div className="flex h-6 bg-[#d6dade] pl-[2px] text-[10px]">
      <div className="grid w-[1127px] grid-cols-7">
        {rightTabs.map((t) => (
          <div
            key={t.t}
            className={"flex min-w-0 items-center gap-[7px] border-r pl-[7px] pr-1 " + (t.on ? "border-transparent bg-[#f4f4f4] text-[#333]" : "border-[#c3c7cb] text-[#75787c]")}
          >
            <span className="flex w-3.5 shrink-0 justify-center">{t.i}</span>
            <span className="flex-1 overflow-hidden whitespace-nowrap [mask-image:linear-gradient(to_right,black_94%,transparent)]">{t.t}</span>
            {t.on && <button aria-label="Close tab"><X className="size-3" strokeWidth={2.5} /></button>}
          </div>
        ))}
      </div>
      <button aria-label="New tab" className="ml-3 flex items-center"><Plus className="size-4" /></button>
      <div className="ml-auto grid w-[163px] grid-cols-4 place-items-center">
        <button aria-label="Search tabs"><ChevronDown className="size-3.5" strokeWidth={1.5} /></button>
        <button aria-label="Minimize"><Minus className="size-3" /></button>
        <button aria-label="Restore"><Copy className="size-3 -scale-x-100" /></button>
        <button aria-label="Close"><X className="size-3.5" strokeWidth={1.5} /></button>
      </div>
    </div>
    <div className="flex h-[34px] items-center border-b border-[#dedede] bg-[#f4f4f4] pl-[11px] pr-[11px] text-[12px]">
      <button aria-label="Back"><Triangle className="size-3 -rotate-90" /></button>
      <button aria-label="Forward" className="ml-4 text-[#c4c4c4]"><Triangle className="size-3 rotate-90" /></button>
      <button aria-label="Reload" className="ml-4"><RotateCw className="size-[13px]" strokeWidth={2.5} /></button>
      <button aria-label="Bookmark" className="ml-[93px]"><Bookmark className="size-3.5" /></button>
      <div className="ml-[13px] flex h-6 flex-1 items-center rounded-[4px] bg-white pl-[9px] pr-2">
        <TriangleAlert className="size-3.5 fill-[#5a5a5a] text-white" />
        <span className="ml-[7px] w-[61px] whitespace-nowrap text-[#707070]">Not secure</span>
        <span className="mx-[7px] h-3.5 w-px bg-[#aaa]" />
        <input aria-label="Address" defaultValue="54.176.181.88:8080/job/vproifle-ci-pipeline/" className="flex-1 bg-transparent text-[#707070] outline-none" />
        <span className="mr-2.5 h-3.5 w-px bg-[#d0d0d0]" />
        <Brave />
        <span className="w-[15px]" />
        <Bat />
      </div>
      <Wallet className="ml-[146px] size-[15px]" />
      <Menu className="ml-[15px] size-3.5" />
    </div>
  </header>
);

const RightWindow = () => (
  <section className="flex h-[1080px] flex-col border-r border-[#333] bg-black pt-5">
    <RightBrowserBar />
    <div className="flex h-[668px] shrink-0 overflow-hidden bg-white">
      <div className="relative flex min-w-0 flex-1 flex-col">
        <div className="relative z-10 flex h-[38px] shrink-0 items-center gap-[10px] bg-[#f1f1f1] pl-[14px] text-[12px] text-[#444]">
          Dashboard <ChevronRight className="size-3 text-[#777]" /> vproifle-ci-pipeline <ChevronRight className="size-3 text-[#777]" />
        </div>
        <div className="flex h-[604px] shrink-0 overflow-hidden">
          <aside className="w-[301px] shrink-0 text-[11px]">
            {rightBuilds.map(([id, date, ok]) => (
              <div key={id} className="flex h-[29px] items-center border-b border-[#f0f0f0] pl-[7px] odd:bg-[#f8f8f8]">
                <Status ok={ok} className="size-[15px]" />
                <a href="#" className="ml-[3px] w-[54px] text-[#444] underline">{id}</a>
                <a href="#" className="text-[10px] text-[#808080] underline">{date}</a>
              </div>
            ))}
            <div className="flex h-8 items-center justify-end gap-[5px] bg-[#f2f2f2] pr-[25px] text-[10px] text-[#444]">
              <Rss className="size-3" />
              <a href="#" className="mr-1 underline">Atom feed for all</a>
              <Rss className="size-3" />
              <a href="#" className="underline">Atom feed for failures</a>
            </div>
          </aside>
          <main className="flex-1 pl-[29px] text-[#333]">
            <table className="-mt-[31px] w-[910px] table-fixed border-separate border-spacing-0">
              <colgroup>
                <col className="w-[214px]" />
                {rightRuns[0].cells.map((_, i) => <col key={i} />)}
              </colgroup>
              <tbody className="[&>tr:not(:last-child)>td:last-child]:shadow-[2px_0_2px_#ccc] [&>tr:last-child>td]:shadow-[1px_4px_3px_#ccc]">
                {rightRuns.map((r) => <StageRow key={r.id} run={r} size="lg" />)}
              </tbody>
            </table>
            <h2 className="mt-[17px] text-[19px] font-semibold leading-7">SonarQube Quality Gate</h2>
            <div className="relative mt-[26px] pl-5">
              <div className="flex h-[25px] items-center gap-2 text-[14px]">
                vprofile
                <span className="bg-[#84bb4c] px-[5px] text-[14px] font-semibold leading-[25px] text-white">Passed</span>
              </div>
              <div className="mt-1 flex h-[23px] items-center gap-[6px] pl-0.5 text-[11px] text-[#888]">
                server-side processing:
                <span className="bg-[#84bb4c] px-[6px] text-[12px] font-semibold leading-[23px] text-white">Success</span>
              </div>
              <div className="absolute left-[19px] top-0 size-10 rounded-full bg-[radial-gradient(circle,#f3ec3fbb_30%,#f3ec3f00_70%)]" />
              <svg viewBox="0 0 8 16" className="absolute left-[35px] top-[14px] h-4 w-2" fill="none" stroke="#555"><path d="M1 1q3 0 3 2v10q0 2-3 2M7 1q-3 0-3 2M4 13q0 2 3 2" /></svg>
            </div>
            <h2 className="mt-1 text-[19px] font-semibold leading-7">Permalinks</h2>
            <ul className="mt-[23px] grid h-28 list-disc auto-rows-fr pl-9 text-[12px] leading-[18px]">
              {rightLinks.map((l) => (
                <li key={l}><a href="#" className="text-[#2a62b0]">{l}</a></li>
              ))}
            </ul>
          </main>
        </div>
        <div className="flex flex-1 items-start justify-end gap-[38px] overflow-hidden border-t border-[#eaeaea] bg-[#f6f6f6] pr-[18px] pt-[18px] text-[11px] font-semibold leading-4 text-[#444]">
          <a href="#">REST API</a>
          <a href="#">Jenkins 2.346.3</a>
        </div>
        <div className="absolute bottom-[59px] right-[41px] w-[298px] whitespace-nowrap text-[14px] leading-5 text-[#ababab]">
          <div className="text-[19px] leading-6">Windows'u Etkinleştir</div>
          Windows'u etkinleştirmek için Ayarlar'a gidin.
        </div>
      </div>
      <div className="flex w-[13px] flex-col items-center bg-[#f1f1f1] py-[6px]">
        <Arrow />
        <div className="mt-[317px] h-[314px] w-3 bg-[#b9b9b9]" />
        <div className="mt-auto"><Arrow down /></div>
      </div>
    </div>
    <div className="pr-2.5 text-right text-[14px] leading-[13px] text-[#8b8b8b]">udemy</div>
  </section>
);

export default function App() {
  return (
    <div className="grid grid-cols-[1920fr_1366fr] overflow-hidden bg-black font-['Open_Sans','Noto_Sans',sans-serif]">
      <LeftWindow />
      <RightWindow />
    </div>
  );
}
